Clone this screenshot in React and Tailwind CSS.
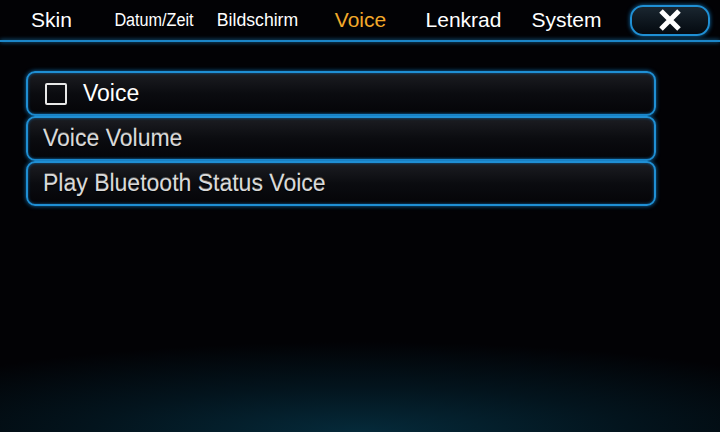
import React from "react";

const tabs = [
  { label: "Skin" },
  { label: "Datum/Zeit", cls: "text-[18px] inline-block scale-x-[0.9]" },
  { label: "Bildschirm", cls: "text-[18px] inline-block scale-x-[0.98]" },
  { label: "Voice", active: true },
  { label: "Lenkrad" },
  { label: "System" },
];

const Row = ({ children }) => (
  <div className="h-[45px] flex items-center rounded-[9px] border-2 border-[#1f8fd4] bg-gradient-to-b from-[#1c1d22] via-[#0b0c10] to-[#050508] shadow-[0_0_4px_#0f6fb0,inset_0_0_3px_#0f5f99] px-[15px]">
    {children}
  </div>
);

export default function App() {
  return (
    <div
      className="w-[720px] h-[432px] overflow-hidden relative bg-[#020205] flex flex-col"
      style={{ fontFamily: '"Liberation Sans", Arial, sans-serif' }}
    >
      {/* bottom glow */}
      <div className="absolute inset-x-0 bottom-0 h-[90px] bg-[radial-gradient(ellipse_75%_100%_at_50%_100%,#052a3a_0%,#03141d_50%,transparent_100%)]" />

      {/* tab bar */}
      <div className="relative h-[40px] flex items-center shrink-0">
        {tabs.map((t) => (
          <div key={t.label} className="w-[103px] flex justify-center items-center">
            <span className={(t.active ? "text-[#f2a92a] " : "text-white ") + (t.cls || "text-[21px]")}>
              {t.label}
            </span>
          </div>
        ))}
        <div className="ml-[12px] w-[80px] h-[31px] rounded-[13px] border-2 border-[#1f8fd4] bg-gradient-to-b from-[#1a2630] to-[#050a10] shadow-[0_0_4px_#0f6fb0] flex items-center justify-center">
          <svg width="24" height="22" viewBox="0 0 24 22">
            <path d="M3 2 L21 20 M21 2 L3 20" stroke="white" strokeWidth="5" strokeLinecap="butt" />
          </svg>
        </div>
      </div>
      <div className="relative h-[2px] bg-[#1c86c8] shadow-[0_0_4px_#1c86c8]" />

      {/* list */}
      <div className="relative mt-[29px] ml-[26px] w-[630px] flex flex-col">
        <Row>
          <div className="w-[22px] h-[22px] border-2 border-[#e8e8e8] rounded-[2px] ml-[2px] mr-[16px]" />
          <span className="text-[23px] text-white">Voice</span>
        </Row>
        <Row>
          <span className="text-[23px] text-[#dadada] [text-shadow:0_1px_1px_#000,0_-1px_0_#555]">Voice Volume</span>
        </Row>
        <Row>
          <span className="text-[23px] text-[#dadada] [text-shadow:0_1px_1px_#000,0_-1px_0_#555]">Play Bluetooth Status Voice</span>
        </Row>
      </div>
    </div>
  );
}
